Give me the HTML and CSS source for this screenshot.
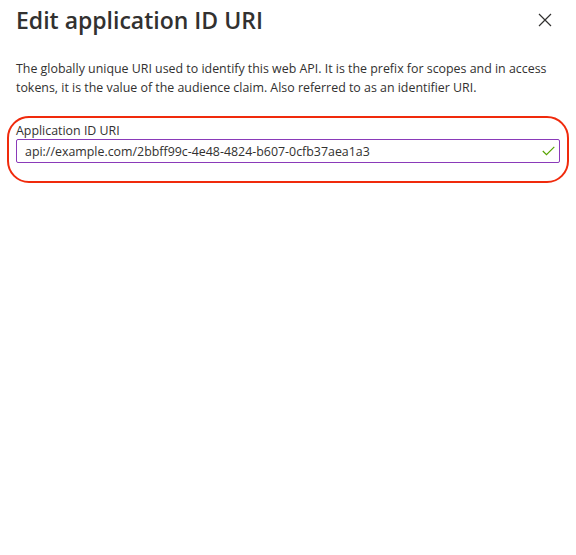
FILE: index.html
```html
<!DOCTYPE html>
<html lang="en">
  <head>
    <meta charset="UTF-8" />
    <meta name="viewport" content="width=device-width, initial-scale=1.0" />
    <title>Edit application ID URI</title>
    <link rel="stylesheet" href="styles.css">
  </head>
  <body>
    <div class="panel">
      <div class="panel-header">
        <h1>Edit application ID URI</h1>
        <button class="close-btn" aria-label="Close">
          <svg width="14" height="14" viewBox="0 0 14 14">
            <path d="M1 1 L13 13 M13 1 L1 13" stroke="#323130" stroke-width="1.2" fill="none" />
          </svg>
        </button>
      </div>

      <p class="description">
        The globally unique URI used to identify this web API. It is the prefix for scopes and in access
        tokens, it is the value of the audience claim. Also referred to as an identifier URI.
      </p>

      <div class="highlight">
        <label for="appIdUri">Application ID URI</label>
        <div class="field">
          <input type="text" id="appIdUri" value="api://example.com/2bbff99c-4e48-4824-b607-0cfb37aea1a3" />
          <svg class="check" width="13" height="10" viewBox="0 0 13 10">
            <path d="M0.8 5 L4.5 8.7 L12.3 0.9" stroke="#57a300" stroke-width="1.2" fill="none" />
          </svg>
        </div>
      </div>
    </div>
  </body>
</html>
```

FILE: styles.css
```css
:root {
  --text: #323130;
  --field-border: #8a3ab9;
  --mark: #f02a0c;
}

body {
  margin: 0;
  font-family: "Open Sans", "Noto Sans", sans-serif;
  background-color: white;
  color: var(--text);
}

.panel {
  padding: 0 16px;
}

.panel-header {
  display: flex;
  justify-content: space-between;
  align-items: flex-start;
  height: 40px;
}

.panel-header h1 {
  margin: 0;
  padding-top: 4px;
  font-size: 23px;
  font-weight: 600;
  line-height: 32px;
}

.close-btn {
  background: none;
  border: none;
  padding: 0;
  margin: 13px 8px 0 0;
  width: 14px;
  height: 14px;
  display: flex;
  cursor: pointer;
}

.description {
  margin: 19px 0 0;
  font-size: 12.4px;
  line-height: 19px;
}

.highlight {
  margin: 19px -9px 0 -9px;
  padding: 4px 7px 18px;
  border: 2px solid var(--mark);
  border-radius: 22px;
}

.highlight label {
  display: block;
  font-size: 12.4px;
  line-height: 17px;
}

.field {
  position: relative;
}

.field input {
  display: block;
  box-sizing: border-box;
  width: 100%;
  height: 24px;
  margin: 0;
  padding: 0 30px 0 8px;
  border: 1px solid var(--field-border);
  border-radius: 2px;
  font-family: inherit;
  font-size: 12.4px;
  color: var(--text);
  outline: none;
}

.check {
  position: absolute;
  right: 5px;
  top: 7px;
}
```
